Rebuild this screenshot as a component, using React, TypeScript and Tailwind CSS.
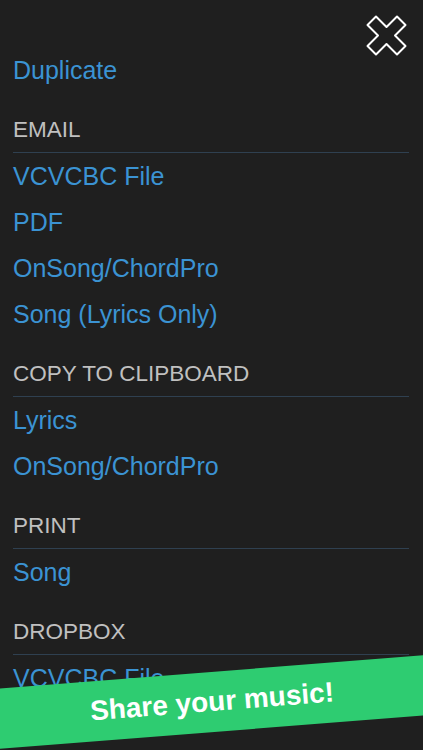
import React from 'react';

const blue = 'text-[#3b93d3]';

function Item({ label }: { label: string }) {
    return (
        <div className={`h-[46px] flex items-center text-[25px] leading-none ${blue}`}>{label}</div>
    );
}

function Section({ title, items }: { title: string; items: string[] }) {
    return (
        <div>
            <div className="pt-[24px] pb-[9px] text-[22.5px] leading-[26px] text-[#c0c0c0]">{title}</div>
            <div className="h-px bg-[#2f4050]" />
            {items.map((it) => (
                <Item key={it} label={it} />
            ))}
        </div>
    );
}

function CloseIcon() {
    return (
        <svg width="41" height="41" viewBox="0 0 41 41" fill="none">
            <polygon
                points="1.5,10 10,1.5 20.5,12 31,1.5 39.5,10 29,20.5 39.5,31 31,39.5 20.5,29 10,39.5 1.5,31 12,20.5"
                stroke="#ffffff"
                strokeWidth="2"
                strokeLinejoin="round"
            />
        </svg>
    );
}

export default function App() {
    return (
        <div
            className="relative w-full h-[750px] overflow-hidden bg-[#1f1f1f]"
            style={{ fontFamily: '"Liberation Sans", Arial, sans-serif' }}
        >
            {/* Close button */}
            <button className="absolute top-[15px] right-[16px]" aria-label="Close">
                <CloseIcon />
            </button>

            <div className="pl-[13px] pr-[14px] pt-[47px]">
                <Item label="Duplicate" />
                <Section title="EMAIL" items={['VCVCBC File', 'PDF', 'OnSong/ChordPro', 'Song (Lyrics Only)']} />
                <Section title="COPY TO CLIPBOARD" items={['Lyrics', 'OnSong/ChordPro']} />
                <Section title="PRINT" items={['Song']} />
                <Section title="DROPBOX" items={['VCVCBC File', 'PDF']} />
            </div>

            {/* Promo banner */}
            <div className="absolute left-[-28px] top-[672px] w-[480px] h-[60px] bg-[#2ecc71] rotate-[-4.5deg] flex items-center justify-center">
                <span className="text-white font-bold text-[28px] leading-none">Share your music!</span>
            </div>
        </div>
    );
}
